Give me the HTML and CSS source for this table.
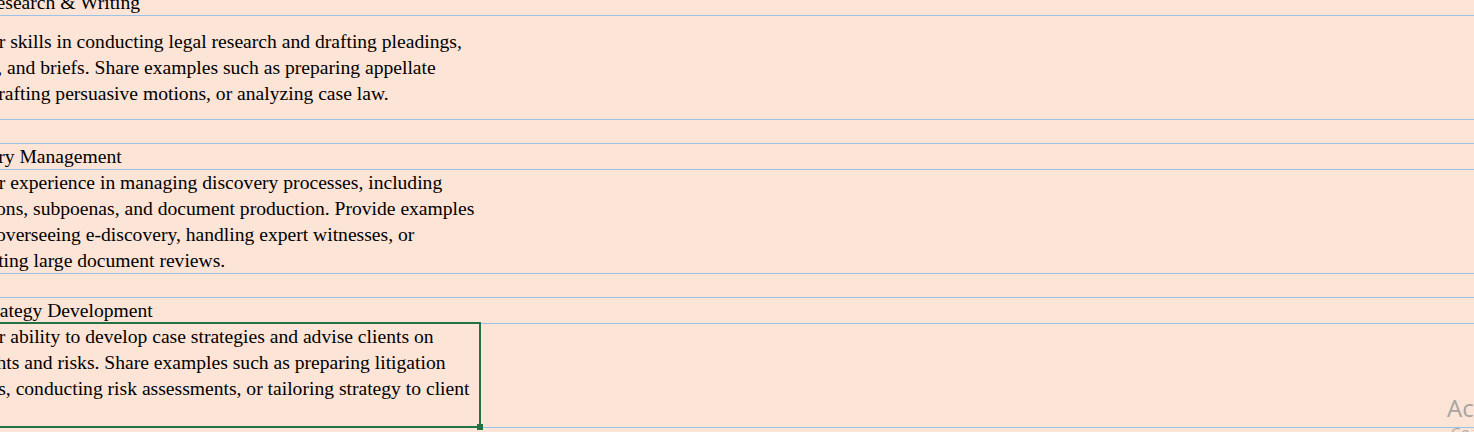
FILE: index.html
```html
<!DOCTYPE html>
<html lang="en">
<head>
<meta charset="utf-8">
<title>Skills sheet</title>
<link rel="stylesheet" href="styles.css">
</head>
<body>
<div class="sheet">
  <div class="row title"><div class="cell">Legal Research &amp; Writing</div></div>
  <div class="row desc"><div class="cell">List your skills in conducting legal research and drafting pleadings,<br>motions, and briefs. Share examples such as preparing appellate<br>briefs, drafting persuasive motions, or analyzing case law.</div></div>
  <div class="row spacer"></div>
  <div class="row title"><div class="cell">Discovery Management</div></div>
  <div class="row desc"><div class="cell">List your experience in managing discovery processes, including<br>depositions, subpoenas, and document production. Provide examples<br>such as overseeing e-discovery, handling expert witnesses, or<br>accelerating large document reviews.</div></div>
  <div class="row spacer"></div>
  <div class="row title"><div class="cell">Case Strategy Development</div></div>
  <div class="row desc"><div class="cell selected">List your ability to develop case strategies and advise clients on<br>their rights and risks. Share examples such as preparing litigation<br>timelines, conducting risk assessments, or tailoring strategy to client<br>goals.</div></div>
  <div class="row spacer"></div>
</div>
<div class="watermark">
  <div class="wm-title">Activate Windows</div>
  <div class="wm-sub">Go to Settings to activate Windows.</div>
</div>
</body>
</html>
```

FILE: styles.css
```css
html, body {
  margin: 0;
  padding: 0;
  background: #fce4d6;
  overflow: hidden;
  width: 1474px;
  height: 432px;
}

body {
  position: relative;
  font-family: "Liberation Serif", "Times New Roman", serif;
  font-size: 19.6px;
  color: #000;
}

.sheet {
  margin-top: -10px;
  display: flex;
  flex-direction: column;
}

.row {
  display: flex;
  border-bottom: 1px solid #9bc2e6;
}

.row.title { height: 25px; }
.row.desc { height: 103px; }
.row.spacer { height: 23px; }

.cell {
  box-sizing: border-box;
  width: 550px;
  margin-left: -69px;
  padding-left: 3px;
  display: flex;
  flex-direction: column;
  justify-content: center;
  line-height: 26px;
  white-space: nowrap;
  overflow: hidden;
}

.cell.selected {
  position: relative;
  overflow: visible;
}

.cell.selected::after {
  content: "";
  position: absolute;
  top: -2px;
  left: 0;
  right: 0;
  bottom: -1px;
  border: 2px solid #217346;
  pointer-events: none;
}

.cell.selected::before {
  content: "";
  position: absolute;
  right: -2px;
  bottom: -3px;
  width: 6px;
  height: 6px;
  background: #217346;
  z-index: 1;
}

.watermark {
  position: absolute;
  left: 1447px;
  top: 391px;
  font-family: "Open Sans", "Noto Sans", sans-serif;
  color: #a7a4a2;
  white-space: nowrap;
}

.wm-title {
  font-size: 24px;
  line-height: 33px;
}

.wm-sub {
  font-size: 14px;
  line-height: 18px;
  margin-left: 4px;
}
```
